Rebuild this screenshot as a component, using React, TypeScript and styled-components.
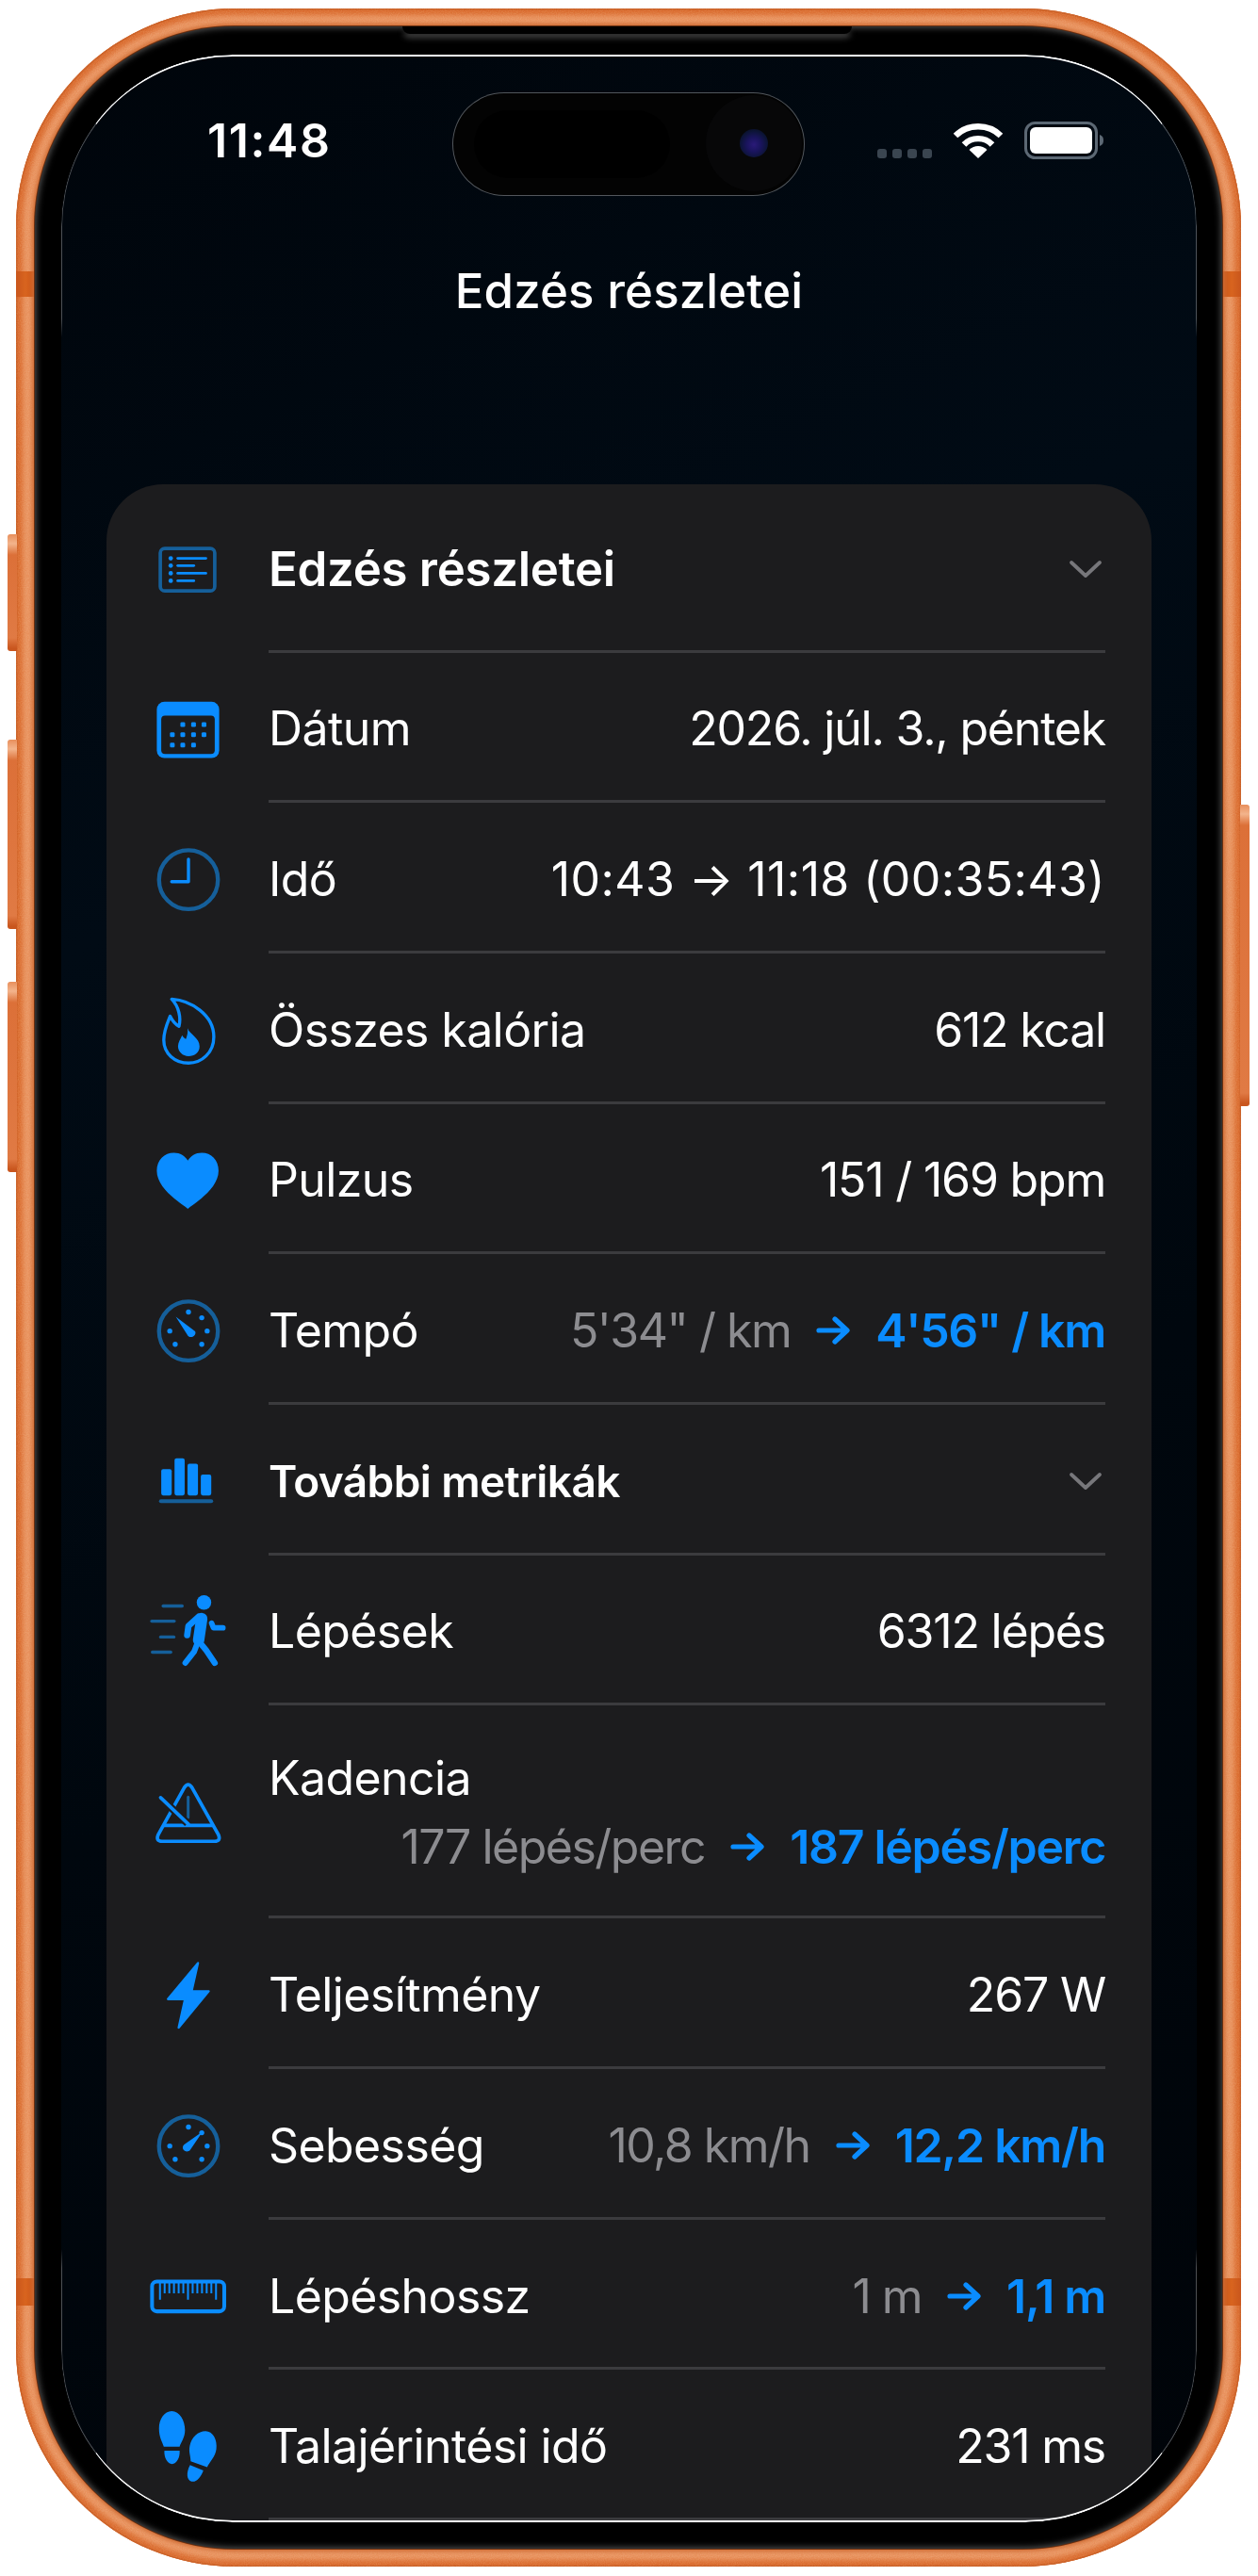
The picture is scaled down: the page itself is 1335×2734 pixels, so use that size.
import React from 'react';
import styled, { createGlobalStyle } from 'styled-components';

const BLUE = '#0a8cff';
const DIM = '#155f9a';
const CARD = '#1c1c1e';

const Global = createGlobalStyle`
  html, body { margin: 0; padding: 0; background: #fff; }
  body { font-family: Inter, "Noto Sans", "Liberation Sans", sans-serif; -webkit-font-smoothing: antialiased; }
`;

const Stage = styled.div`
  width: 1335px;
  height: 2734px;
  padding: 9px 0 0 17px;
  box-sizing: border-box;
  overflow: hidden;
`;

const Phone = styled.div`
  position: relative;
  width: 1300px;
  height: 2715px;
  box-sizing: border-box;
  padding: 19px 20px;
  border-radius: 232px;
  background: #e9935f;
  box-shadow:
    inset 0 0 0 1.5px #c95e25,
    inset 0 0 5px 7px #d96a2e;
`;

const FrameGrain = styled.svg`
  position: absolute;
  inset: 0;
  width: 100%;
  height: 100%;
  border-radius: 232px;
  opacity: 0.35;
  mix-blend-mode: soft-light;
  pointer-events: none;
`;

const SideButton = styled.div<{ $side: 'left' | 'right'; $top: number; $height: number }>`
  position: absolute;
  top: ${p => p.$top}px;
  height: ${p => p.$height}px;
  width: 10px;
  ${p => (p.$side === 'left' ? 'left: -9px; border-radius: 3px 0 0 3px;' : 'right: -9px; border-radius: 0 3px 3px 0;')}
  background: linear-gradient(180deg, #e88f5c 0, #f3b48c 10px, #dc7038 22px, #e07a44 calc(100% - 14px), #c9561e calc(100% - 3px));
`;

const AntennaBand = styled.div<{ $side: 'left' | 'right'; $top: number; $height: number }>`
  position: absolute;
  top: ${p => p.$top}px;
  height: ${p => p.$height}px;
  width: 20px;
  ${p => (p.$side === 'left' ? 'left: 0;' : 'right: 0;')}
  background: linear-gradient(${p => (p.$side === 'left' ? '90deg' : '270deg')}, #c9561c, #d8641f 50%, #c95518);
`;

const Bezel = styled.div`
  position: relative;
  display: flex;
  height: 100%;
  box-sizing: border-box;
  padding: 30px 27px 28px 28px;
  border-radius: 212px;
  background: #000;
  box-shadow:
    0 0 0 1px #6a2f10,
    0 0 4px 3px #cf6c34,
    inset 0 0 7px 1px rgba(150, 150, 150, 0.6);
`;

const EarBar = styled.div`
  position: absolute;
  top: 0;
  left: 390px;
  width: 477px;
  height: 8px;
  background: #000;
  border-radius: 0 0 14px 14px;
  box-shadow: 0 5px 6px -1px rgba(110, 110, 110, 0.65);
`;

const Screen = styled.div`
  position: relative;
  flex: 1;
  display: flex;
  flex-direction: column;
  overflow: hidden;
  border-radius: 182px;
  background: linear-gradient(155deg, #00050b 0%, #010b15 30%, #00070e 60%, #000409 100%);
`;

const ScreenRim = styled.div`
  position: absolute;
  inset: 0;
  z-index: 3;
  pointer-events: none;
  border-radius: 182px;
  border: 1px solid rgba(255, 255, 255, 0.3);
  border-top: 2.5px solid #fff;
  border-bottom: 2.5px solid #fff;
  -webkit-mask-image: linear-gradient(180deg, #000 0, #000 280px, transparent 300px, transparent calc(100% - 290px), #000 calc(100% - 270px));
  mask-image: linear-gradient(180deg, #000 0, #000 280px, transparent 300px, transparent calc(100% - 290px), #000 calc(100% - 270px));
`;

const Island = styled.div`
  position: absolute;
  top: 41px;
  left: 416px;
  width: 372px;
  height: 108px;
  border-radius: 54px;
  background: #030303;
  box-shadow: 0 0 0 1px rgba(255, 255, 255, 0.32);
  overflow: hidden;
`;

const IslandSensor = styled.div`
  position: absolute;
  top: 18px;
  left: 22px;
  width: 208px;
  height: 72px;
  border-radius: 36px;
  background: #000;
`;

const CameraWell = styled.div`
  position: absolute;
  top: 2px;
  left: 268px;
  width: 102px;
  height: 102px;
  border-radius: 50%;
  background: #070708;
  display: flex;
  align-items: center;
  justify-content: center;
`;

const Lens = styled.div`
  width: 30px;
  height: 30px;
  border-radius: 50%;
  background: radial-gradient(circle at 50% 55%, #2a1a78 0, #19145c 35%, #0c1436 65%, #060810 100%);
`;

const StatusBar = styled.div`
  flex: none;
  height: 182px;
  box-sizing: border-box;
  padding: 0 99px 0 155px;
  display: flex;
  align-items: center;
  justify-content: space-between;
`;

const Clock = styled.span`
  color: #fff;
  font-size: 50px;
  font-weight: 600;
  line-height: 60px;
  letter-spacing: 1.6px;
`;

const StatusIcons = styled.div`
  display: flex;
  align-items: center;
  gap: 22px;
`;

const SignalDots = styled.div`
  display: flex;
  gap: 6px;
  margin-top: 27px;
`;

const SignalDot = styled.span`
  width: 10px;
  height: 10px;
  border-radius: 3px;
  background: #3a4550;
`;

const TitleBar = styled.div`
  flex: none;
  height: 274px;
  box-sizing: border-box;
  padding-top: 39px;
  text-align: center;
  color: #fff;
  font-size: 51px;
  line-height: 60px;
  font-weight: 500;
  letter-spacing: 0.1px;
`;

const Card = styled.div`
  flex: none;
  margin: 0 48px;
  background: ${CARD};
  border-radius: 60px 60px 0 0;
`;

const Row = styled.div<{ $height: number }>`
  height: ${p => p.$height}px;
  display: grid;
  grid-template-columns: 172px 1fr;
  padding-right: 49px;
`;

const IconCell = styled.div`
  display: flex;
  align-items: center;
  justify-content: center;
  width: 171px;
`;

const Glyph = styled.svg`
  width: 84px;
  height: 84px;
  display: block;
  overflow: visible;
`;

const RowBody = styled.div<{ $stacked?: boolean }>`
  display: flex;
  flex-direction: ${p => (p.$stacked ? 'column' : 'row')};
  align-items: ${p => (p.$stacked ? 'stretch' : 'center')};
  justify-content: ${p => (p.$stacked ? 'flex-start' : 'space-between')};
  box-sizing: border-box;
  border-bottom: 3px solid #3b3b3e;
  padding-top: ${p => (p.$stacked ? '47px' : '5px')};
`;

const Label = styled.span<{ $strong?: boolean; $size: number; $tracking: number }>`
  color: #fff;
  font-size: ${p => p.$size}px;
  font-weight: ${p => (p.$strong ? 600 : 400)};
  line-height: 60px;
  letter-spacing: ${p => p.$tracking}px;
`;

const Value = styled.div<{ $stacked?: boolean; $airy?: boolean }>`
  display: flex;
  align-items: center;
  justify-content: flex-end;
  gap: 27px;
  color: #fff;
  font-size: 50px;
  line-height: 60px;
  letter-spacing: ${p => (p.$airy ? '0.4px' : '-1.2px')};
  white-space: nowrap;
  margin-top: ${p => (p.$stacked ? '13px' : '0')};
`;

const Before = styled.span`
  color: #8c8c90;
  letter-spacing: -1.5px;
`;

const After = styled.span`
  color: ${BLUE};
  font-weight: 600;
  letter-spacing: -1.3px;
`;

const ArrowGlyph = styled.svg`
  width: 36px;
  height: 30px;
  flex: none;
`;

const ChevronGlyph = styled.svg`
  width: 36px;
  height: 20px;
  flex: none;
  margin-right: 3px;
`;

const view = (cy: number, x = 80) => `${x} ${cy - 125} 250 250`;

const ListIcon = () => (
  <Glyph viewBox={view(186)}>
    <rect x="119" y="124" width="172" height="134" rx="14" fill="none" stroke={DIM} strokeWidth="11" />
    {[155, 178, 202, 226].map((y, i) => (
      <g key={y}>
        <circle cx="152" cy={y} r="7" fill={BLUE} />
        <line x1="174" x2={i % 2 ? 225 : 263} y1={y} y2={y} stroke={BLUE} strokeWidth="8" strokeLinecap="round" />
      </g>
    ))}
  </Glyph>
);

const CalendarIcon = () => (
  <Glyph viewBox={view(691)}>
    <rect x="108" y="610" width="197" height="178" rx="24" fill={BLUE} />
    <rect x="122" y="654" width="169" height="121" rx="12" fill={CARD} />
    {[[190, 682], [224, 682], [257, 682], [157, 714], [190, 714], [224, 714], [257, 714], [157, 747], [190, 747], [224, 747]].map(([x, y]) => (
      <rect key={`${x}-${y}`} x={x - 7.5} y={y - 7.5} width="15" height="15" rx="4" fill={BLUE} />
    ))}
  </Glyph>
);

const ClockIcon = () => (
  <Glyph viewBox={view(1172)}>
    <circle cx="208" cy="1177" r="93" fill="none" stroke={DIM} strokeWidth="13" />
    <path d="M208 1112V1183H155" fill="none" stroke={BLUE} strokeWidth="10" strokeLinecap="round" strokeLinejoin="round" />
  </Glyph>
);

const FlameIcon = () => (
  <Glyph viewBox={view(270)}>
    <path
      d="M155 176C215 180 288 225 288 295C288 345 250 378 208 378C165 378 130 348 130 305C130 275 142 250 150 230C155 240 165 255 178 262C185 235 178 200 155 176Z"
      fill="none"
      stroke={BLUE}
      strokeWidth="10"
      strokeLinejoin="round"
    />
    <path
      d="M205 268C212 288 243 298 243 325C243 345 227 356 208 356C190 356 175 342 175 325C175 312 183 302 188 290C191 296 196 300 200 302C204 292 207 280 205 268Z"
      fill={BLUE}
    />
  </Glyph>
);

const HeartIcon = () => (
  <Glyph viewBox={view(750)}>
    <path
      d="M206 845C190 830 108 785 108 725C108 690 132 668 162 668C182 668 197 678 206 693C215 678 230 668 250 668C280 668 303 690 303 725C303 785 222 830 206 845Z"
      fill={BLUE}
    />
  </Glyph>
);

const dialDots: [number, number][] = [[0, -60], [42, -42], [59, 0], [42, 42], [-42, 42], [-59, 0]];

const PaceIcon = () => (
  <Glyph viewBox={view(28)}>
    <circle cx="208" cy="33" r="93" fill="none" stroke={DIM} strokeWidth="13" />
    {dialDots.map(([dx, dy]) => (
      <circle key={`${dx}${dy}`} cx={208 + dx} cy={33 + dy} r="8" fill={BLUE} />
    ))}
    <path d="M168 -12L229 34C233 42 226 52 216 52C210 52 207 49 204 44Z" fill={BLUE} />
  </Glyph>
);

const BarsIcon = () => (
  <Glyph viewBox={view(510)}>
    <rect x="122" y="475" width="33" height="83" rx="6" fill={BLUE} />
    <rect x="164" y="441" width="32" height="117" rx="6" fill={BLUE} />
    <rect x="205" y="458" width="33" height="100" rx="6" fill={BLUE} />
    <rect x="247" y="492" width="33" height="66" rx="6" fill={BLUE} />
    <line x1="121" x2="280" y1="576" y2="576" stroke={DIM} strokeWidth="12" strokeLinecap="round" />
  </Glyph>
);

const WalkerIcon = () => (
  <Glyph viewBox={view(988)}>
    {[[128, 188, 912], [92, 163, 960], [120, 162, 1010], [94, 152, 1058]].map(([a, b, y]) => (
      <line key={y} x1={a} x2={b} y1={y} y2={y} stroke={DIM} strokeWidth="10" strokeLinecap="round" />
    ))}
    <circle cx="257" cy="901" r="23" fill={BLUE} />
    <g fill="none" stroke={BLUE} strokeLinecap="round" strokeLinejoin="round">
      <path d="M250 952L240 1020" strokeWidth="36" />
      <path d="M240 946L208 975L204 1004" strokeWidth="20" />
      <path d="M281 966L287 981H317" strokeWidth="17" />
      <path d="M236 1030L226 1056L198 1092" strokeWidth="18" />
      <path d="M242 1025L264 1052L291 1092" strokeWidth="19" />
    </g>
  </Glyph>
);

const MetronomeIcon = () => (
  <Glyph viewBox={view(367)}>
    <path d="M195 290Q207 272 219 290L302 438Q312 460 290 460H125Q103 460 113 438Z" fill="none" stroke={BLUE} strokeWidth="11" strokeLinejoin="round" />
    <line x1="130" x2="285" y1="410" y2="410" stroke={BLUE} strokeWidth="11" />
    <line x1="207" x2="207" y1="320" y2="385" stroke={DIM} strokeWidth="9" strokeLinecap="round" />
    <line x1="120" x2="205" y1="322" y2="403" stroke={CARD} strokeWidth="24" />
    <line x1="120" x2="208" y1="322" y2="406" stroke={BLUE} strokeWidth="11" strokeLinecap="round" />
  </Glyph>
);

const BoltIcon = () => (
  <Glyph viewBox={view(945)}>
    <path d="M238 848L143 962H197L177 1052L272 937H218Z" fill={BLUE} stroke={BLUE} strokeWidth="7" strokeLinejoin="round" />
  </Glyph>
);

const SpeedIcon = () => (
  <Glyph viewBox={view(225)}>
    <circle cx="208" cy="230" r="93" fill="none" stroke={DIM} strokeWidth="13" />
    {dialDots.map(([dx, dy]) => (
      <circle key={`${dx}${dy}`} cx={208 + dx} cy={230 + dy} r="8" fill={BLUE} />
    ))}
    <path d="M253 184L213 243C207 250 195 248 191 240C188 232 192 227 198 223Z" fill={BLUE} />
  </Glyph>
);

const RulerIcon = () => (
  <Glyph viewBox={view(703)}>
    <rect x="93" y="660" width="228" height="94" rx="15" fill="none" stroke={BLUE} strokeWidth="12" />
    {Array.from({ length: 13 }, (_, i) => {
      const x = 118 + i * 14.75;
      const long = i === 0 || i === 6 || i === 12;
      return <line key={i} x1={x} x2={x} y1="664" y2={long ? 717 : 697} stroke={BLUE} strokeWidth="6" />;
    })}
  </Glyph>
);

const FootprintsIcon = () => (
  <Glyph viewBox={view(582, 470)}>
    <g fill={BLUE}>
      <path d="M545 475C570 475 587 505 587 535C587 558 575 572 570 587H520C515 572 505 558 505 530C505 500 522 475 545 475Z" />
      <path d="M522 600H570C572 622 560 642 546 642C532 642 520 622 522 600Z" />
      <path d="M652 538C675 538 690 565 686 595C683 620 665 635 657 652L605 633C605 615 598 605 602 585C607 558 628 538 652 538Z" />
      <path d="M603 645L645 662C637 685 622 700 608 697C592 693 590 670 603 645Z" />
    </g>
  </Glyph>
);

const Arrow = () => (
  <ArrowGlyph viewBox="0 0 36 30">
    <path d="M3 15H32M20 3L33 15L20 27" fill="none" stroke={BLUE} strokeWidth="5.2" strokeLinecap="round" strokeLinejoin="round" />
  </ArrowGlyph>
);

const Chevron = () => (
  <ChevronGlyph viewBox="0 0 36 20">
    <path d="M3 3L18 17L33 3" fill="none" stroke="#77777b" strokeWidth="3.8" strokeLinecap="round" strokeLinejoin="round" />
  </ChevronGlyph>
);

const WifiIcon = () => (
  <svg width="54" height="40" viewBox="0 0 54 40" style={{ display: 'block' }}>
    <g fill="none" stroke="#fff" strokeWidth="6.4">
      <path d="M3 15C16 2 38 2 51 15" />
      <path d="M12 24.5C20 16 34 16 42 24.5" />
    </g>
    <path d="M27 39L17.5 30C23 24.5 31 24.5 36.5 30Z" fill="#fff" />
  </svg>
);

const BatteryIcon = () => (
  <svg width="84" height="40" viewBox="0 0 84 40" style={{ display: 'block' }}>
    <rect x="1.5" y="1.5" width="75" height="37" rx="10" fill="none" stroke="#5c6874" strokeWidth="3" />
    <rect x="6" y="6" width="66" height="28" rx="6" fill="#fff" />
    <path d="M80 14C83 15 84 17 84 20C84 23 83 25 80 26Z" fill="#5c6874" />
  </svg>
);

type Metric = {
  icon: React.ComponentType;
  label: string;
  value?: string;
  airy?: boolean;
  from?: string;
  to?: string;
  height: number;
  strong?: boolean;
  size?: number;
  tracking?: number;
  chevron?: boolean;
  stacked?: boolean;
};

const metrics: Metric[] = [
  { icon: ListIcon, label: 'Edzés részletei', height: 178.5, strong: true, size: 51, tracking: -0.3, chevron: true },
  { icon: CalendarIcon, label: 'Dátum', value: '2026. júl. 3., péntek', height: 159.7 },
  { icon: ClockIcon, label: 'Idő', value: '10:43 → 11:18 (00:35:43)', airy: true, height: 159.7 },
  { icon: FlameIcon, label: 'Összes kalória', value: '612 kcal', height: 159.7 },
  { icon: HeartIcon, label: 'Pulzus', value: '151 / 169 bpm', height: 159.7 },
  { icon: PaceIcon, label: 'Tempó', from: '5\'34" / km', to: '4\'56" / km', height: 159.7 },
  { icon: BarsIcon, label: 'További metrikák', height: 159.7, strong: true, size: 46, tracking: -0.6, chevron: true },
  { icon: WalkerIcon, label: 'Lépések', value: '6312 lépés', height: 159.7 },
  { icon: MetronomeIcon, label: 'Kadencia', from: '177 lépés/perc', to: '187 lépés/perc', height: 226, stacked: true },
  { icon: BoltIcon, label: 'Teljesítmény', value: '267 W', height: 159.7 },
  { icon: SpeedIcon, label: 'Sebesség', from: '10,8 km/h', to: '12,2 km/h', height: 159.7 },
  { icon: RulerIcon, label: 'Lépéshossz', from: '1 m', to: '1,1 m', height: 159.7 },
  { icon: FootprintsIcon, label: 'Talajérintési idő', value: '231 ms', height: 159.7 },
];

const MetricRow = ({ metric }: { metric: Metric }) => {
  const Icon = metric.icon;
  return (
    <Row $height={metric.height}>
      <IconCell>
        <Icon />
      </IconCell>
      <RowBody $stacked={metric.stacked}>
        <Label $strong={metric.strong} $size={metric.size ?? 50} $tracking={metric.tracking ?? -0.6}>
          {metric.label}
        </Label>
        {metric.chevron && <Chevron />}
        {metric.value && <Value $airy={metric.airy}>{metric.value}</Value>}
        {metric.from && (
          <Value $stacked={metric.stacked}>
            <Before>{metric.from}</Before>
            <Arrow />
            <After>{metric.to}</After>
          </Value>
        )}
      </RowBody>
    </Row>
  );
};

export default function App() {
  return (
    <Stage>
      <Global />
      <Phone>
        <FrameGrain aria-hidden="true">
          <filter id="frame-grain">
            <feTurbulence type="fractalNoise" baseFrequency="0.9" numOctaves="2" />
            <feColorMatrix values="0 0 0 0 1  0 0 0 0 1  0 0 0 0 1  0 0 0 1.6 -0.5" />
          </filter>
          <rect width="100%" height="100%" filter="url(#frame-grain)" />
        </FrameGrain>
        <SideButton $side="left" $top={558} $height={124} />
        <SideButton $side="left" $top={776} $height={201} />
        <SideButton $side="left" $top={1033} $height={202} />
        <SideButton $side="right" $top={845} $height={320} />
        <AntennaBand $side="left" $top={279} $height={27} />
        <AntennaBand $side="right" $top={279} $height={27} />
        <AntennaBand $side="left" $top={2409} $height={29} />
        <AntennaBand $side="right" $top={2409} $height={29} />
        <Bezel>
          <EarBar />
          <Screen>
            <ScreenRim />
            <Island>
              <IslandSensor />
              <CameraWell>
                <Lens />
              </CameraWell>
            </Island>
            <StatusBar>
              <Clock>11:48</Clock>
              <StatusIcons>
                <SignalDots>
                  <SignalDot />
                  <SignalDot />
                  <SignalDot />
                  <SignalDot />
                </SignalDots>
                <WifiIcon />
                <BatteryIcon />
              </StatusIcons>
            </StatusBar>
            <TitleBar>Edzés részletei</TitleBar>
            <Card>
              {metrics.map(metric => (
                <MetricRow key={metric.label} metric={metric} />
              ))}
            </Card>
          </Screen>
        </Bezel>
      </Phone>
    </Stage>
  );
}
